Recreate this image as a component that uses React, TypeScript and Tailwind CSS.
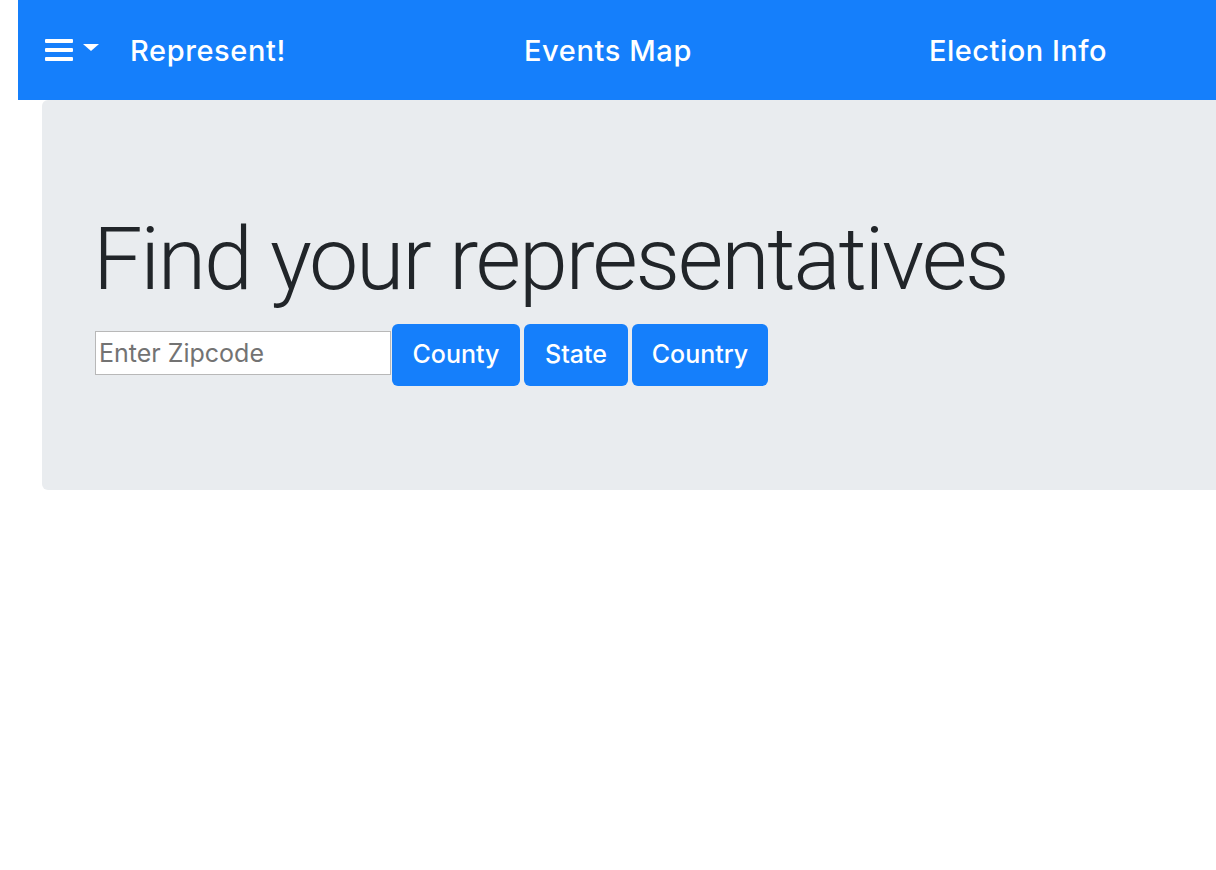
import { useState } from "react";

const NavBar = () => {
  return (
    <nav className="ml-[18px] h-[100px] bg-[#157ffb] flex items-center text-white text-[29px] font-medium font-[Inter,'Noto_Sans',sans-serif]">
      <button className="ml-[27px] flex items-center gap-[10px] w-[85px]">
        <svg width="28" height="24" viewBox="0 0 28 24" fill="currentColor">
          <rect x="0" y="1" width="28" height="4" rx="1" />
          <rect x="0" y="10" width="28" height="4" rx="1" />
          <rect x="0" y="19" width="28" height="4" rx="1" />
        </svg>
        <svg width="16" height="8" viewBox="0 0 16 8" fill="currentColor" className="-mt-[4px]">
          <path d="M0 0 L16 0 L8 7 Z" />
        </svg>
      </button>
      <a href="#" className="w-[394px] mt-[2px] tracking-[0.6px]">Represent!</a>
      <a href="#" className="w-[405px] mt-[2px] tracking-[0.6px]">Events Map</a>
      <a href="#" className="mt-[2px] tracking-[0.5px]">Election Info</a>
    </nav>
  );
};

export default function App() {
  const [zip, setZip] = useState("");
  return (
    <div className="w-[1216px] h-[870px] overflow-hidden bg-white font-[Inter,'Noto_Sans',sans-serif]">
      <NavBar />
      <div className="ml-[42px] w-[1220px] h-[390px] bg-[#e9ecef] rounded-[6px] pl-[51px] pt-[106px]">
        <h1 className="text-[88px] font-light leading-[1.2] text-[#212529] tracking-[-2.2px] font-[Roboto,'Noto_Sans',sans-serif]">
          Find your representatives
        </h1>
        <div className="flex items-start mt-[12px]">
          <input
            value={zip}
            onChange={(e) => setZip(e.target.value)}
            placeholder="Enter Zipcode"
            className="ml-[2px] mt-[7px] w-[296px] h-[44px] bg-white border border-[#b8b8b8] px-[3px] text-[25px] text-[#212529] placeholder:text-[#737373] outline-none"
          />
          <div className="flex gap-[4px] ml-[1px]">
            <button className="h-[62px] w-[128px] bg-[#157ffb] text-white text-[25px] font-medium rounded-[6px]">County</button>
            <button className="h-[62px] w-[104px] bg-[#157ffb] text-white text-[25px] font-medium rounded-[6px]">State</button>
            <button className="h-[62px] w-[136px] bg-[#157ffb] text-white text-[25px] font-medium rounded-[6px]">Country</button>
          </div>
        </div>
      </div>
    </div>
  );
}
